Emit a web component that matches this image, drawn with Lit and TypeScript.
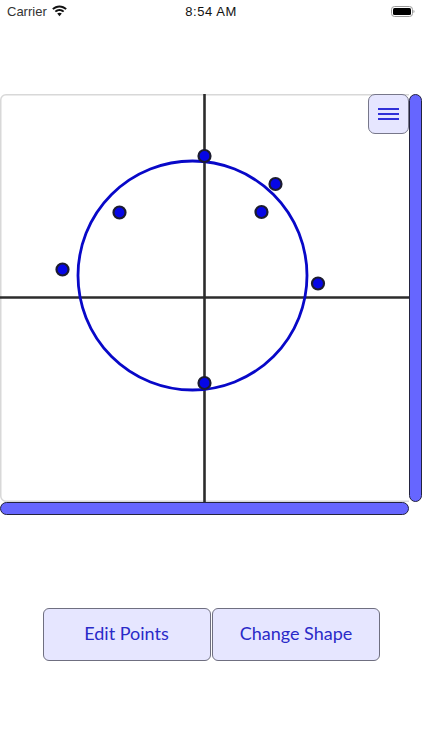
import { LitElement, html, css, svg } from "lit";
import { customElement } from "lit/decorators.js";

const POINTS: [number, number][] = [
  [204.5, 62], [275.5, 90], [261.5, 118], [119.5, 118.5], [62.5, 175.5], [318, 189.5], [204.5, 289],
];

@customElement("app-root")
export class AppRoot extends LitElement {
  static styles = css`
    :host { display: block; width: 422px; height: 750px; background: #fff; overflow: hidden; font-family: "Liberation Sans", Arial, sans-serif; }
    .status { height: 22px; display: grid; grid-template-columns: 1fr auto 1fr; align-items: center; padding: 0 7px 0 7px; color: #111; font-size: 13px; }
    .left { display: flex; align-items: center; gap: 4px; color: #333; }
    .time { font-weight: 500; font-family: "Liberation Sans", sans-serif; font-size: 13px; letter-spacing: .55px; color: #111; }
    .right { justify-self: end; display: flex; }
    .stage { margin-top: 72px; display: grid; grid-template-columns: 409px 13px; grid-template-rows: 408px 13px; }
    .canvas { position: relative; }
    .canvas svg { display: block; }
    .menu { position: absolute; top: 0; right: 0; width: 41px; height: 40px; box-sizing: border-box; border: 1px solid #77778a; border-radius: 7px; background: #e6e6ff; padding: 13px 9px 0; display: flex; flex-direction: column; gap: 3px; }
    .menu i { display: block; height: 2px; background: #3030d8; }
    .vbar, .hbar { box-sizing: border-box; background: #6666ff; border: 1px solid #23233f; border-radius: 6.5px; }
    .actions { margin-top: 93px; padding-left: 42.5px; display: flex; gap: 1.5px; }
    .btn { box-sizing: border-box; width: 168px; height: 53px; padding-bottom: 3px; border: 1px solid #6f6f80; border-radius: 6px; background: #e6e6ff; color: #2a2ac8; display: flex; align-items: center; justify-content: center; font-family: Lato, "Open Sans", sans-serif; font-size: 18px; }
  `;

  render() {
    return html`
      <div class="status">
        <div class="left">
          <span>Carrier</span>
          <svg width="17" height="12" viewBox="0 0 15 11">
            <path d="M7.5 2.2c2.1 0 4 .8 5.5 2.2l1.200-1.200C12.400 1.500 10 .4 7.500.4S2.600 1.500.8 3.200L2 4.400c1.500-1.400 3.400-2.200 5.500-2.200z" fill="#111"/>
            <path d="M7.500 5.400c1.200 0 2.300.5 3.200 1.300l1.200-1.200C10.700 4.400 9.200 3.700 7.500 3.700s-3.200.7-4.400 1.800l1.200 1.200c.9-.8 2-1.300 3.200-1.300z" fill="#111"/>
            <path d="M7.500 7c-.8 0-1.500.3-2.100.9l2.100 2.400 2.100-2.400C9 7.300 8.300 7 7.500 7z" fill="#111"/>
          </svg>
        </div>
        <div class="time">8:54 AM</div>
        <div class="right">
          <svg width="24" height="11" viewBox="0 0 24 11">
            <rect x=".5" y=".5" width="21" height="10" rx="3" fill="none" stroke="#999"/>
            <rect x="2" y="2" width="18" height="7" rx="1.500" fill="#000"/>
            <path d="M22.500 4v3c.6-.2 1-.8 1-1.500s-.4-1.300-1-1.500z" fill="#999"/>
          </svg>
        </div>
      </div>
      <div class="stage">
        <div class="canvas">
          <svg width="409" height="408" viewBox="0 0 409 408">
            <path d="M409 .75H6A5.250 5.250 0 0 0 .75 6v396A5.250 5.250 0 0 0 6 407.250H409" fill="none" stroke="#d8d8d8" stroke-width="1.500"/>
            <line x1="204.500" y1="0" x2="204.500" y2="408" stroke="#2c2c2c" stroke-width="2.600"/>
            <line x1="0" y1="203.500" x2="409" y2="203.500" stroke="#2c2c2c" stroke-width="2.600"/>
            <circle cx="192.500" cy="181.500" r="114.500" fill="none" stroke="#0808c8" stroke-width="2.800"/>
            ${POINTS.map(([x, y]) => svg`<circle cx=${x} cy=${y} r="6" fill="#0606e6" stroke="#1c1c30" stroke-width="2.200"/>`)}
          </svg>
          <div class="menu"><i></i><i></i><i></i></div>
        </div>
        <div class="vbar"></div>
        <div class="hbar"></div>
      </div>
      <div class="actions">
        <div class="btn">Edit Points</div>
        <div class="btn">Change Shape</div>
      </div>
    `;
  }
}
